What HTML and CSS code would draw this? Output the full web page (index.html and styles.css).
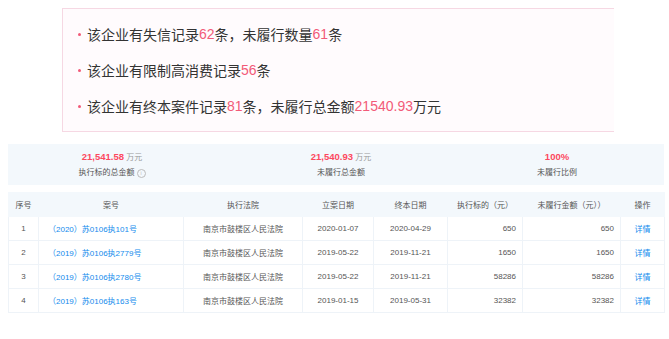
FILE: index.html
```html
<!DOCTYPE html>
<html lang="zh-CN">
<head>
  <meta charset="UTF-8">
  <meta name="viewport" content="width=device-width, initial-scale=1.0">
  <title>终本案件</title>
  <link rel="stylesheet" href="styles.css">
</head>
<body>
  <div class="resumen">
    <p class="linea"><span class="punto"></span>该企业有失信记录<em>62</em>条，未履行数量<em>61</em>条</p>
    <p class="linea"><span class="punto"></span>该企业有限制高消费记录<em>56</em>条</p>
    <p class="linea"><span class="punto"></span>该企业有终本案件记录<em>81</em>条，未履行总金额<em>21540.93</em>万元</p>
  </div>

  <div class="stats">
    <div class="stat">
      <div class="valor"><b>21,541.58</b> 万元</div>
      <div class="etiqueta">执行标的总金额 <span class="info">i</span></div>
    </div>
    <div class="stat">
      <div class="valor"><b>21,540.93</b> 万元</div>
      <div class="etiqueta">未履行总金额</div>
    </div>
    <div class="stat">
      <div class="valor"><b>100%</b></div>
      <div class="etiqueta">未履行比例</div>
    </div>
  </div>

  <table class="tabla">
    <colgroup>
      <col style="width:30px"><col style="width:145px"><col style="width:119px"><col style="width:71px">
      <col style="width:74px"><col style="width:75px"><col style="width:98px"><col style="width:44px">
    </colgroup>
    <thead>
      <tr>
        <th>序号</th><th>案号</th><th>执行法院</th><th>立案日期</th>
        <th>终本日期</th><th>执行标的（元）</th><th>未履行金额（元））</th><th>操作</th>
      </tr>
    </thead>
    <tbody>
      <tr>
        <td>1</td><td class="izq"><a>（2020）苏0106执101号</a></td><td>南京市鼓楼区人民法院</td>
        <td>2020-01-07</td><td>2020-04-29</td><td class="der">650</td><td class="der">650</td><td><a>详情</a></td>
      </tr>
      <tr>
        <td>2</td><td class="izq"><a>（2019）苏0106执2779号</a></td><td>南京市鼓楼区人民法院</td>
        <td>2019-05-22</td><td>2019-11-21</td><td class="der">1650</td><td class="der">1650</td><td><a>详情</a></td>
      </tr>
      <tr>
        <td>3</td><td class="izq"><a>（2019）苏0106执2780号</a></td><td>南京市鼓楼区人民法院</td>
        <td>2019-05-22</td><td>2019-11-21</td><td class="der">58286</td><td class="der">58286</td><td><a>详情</a></td>
      </tr>
      <tr>
        <td>4</td><td class="izq"><a>（2019）苏0106执163号</a></td><td>南京市鼓楼区人民法院</td>
        <td>2019-01-15</td><td>2019-05-31</td><td class="der">32382</td><td class="der">32382</td><td><a>详情</a></td>
      </tr>
    </tbody>
  </table>
</body>
</html>
```

FILE: styles.css
```css
body {
  margin: 0;
  padding: 8px 5px 0 8px;
  background-color: #fff;
  font-family: "Liberation Sans", "Noto Sans CJK SC", sans-serif;
  color: #333;
}

.resumen {
  margin-left: 54px;
  width: 552px;
  box-sizing: border-box;
  padding: 7px 0 7px 15px;
  background-color: #fffbfd;
  border: 1px solid #f6d8e3;
  border-right: none;
}

.linea {
  margin: 0;
  display: flex;
  align-items: center;
  height: 36px;
  font-size: 14px;
  color: #333;
}

.linea em {
  font-style: normal;
  color: #f25a78;
}

.punto {
  width: 3px;
  height: 3px;
  margin-right: 6px;
  border-radius: 50%;
  background-color: #f25a78;
}

.stats {
  display: flex;
  margin-top: 12px;
  height: 41px;
  background-color: #f3f8fc;
}

.stat {
  display: flex;
  flex-direction: column;
  align-items: center;
  justify-content: center;
  gap: 5px;
}

.stat:nth-child(1) {
  flex: 0 0 208px;
}

.stat:nth-child(2) {
  flex: 0 0 250px;
}

.stat:nth-child(3) {
  flex: 0 0 182px;
}

.valor {
  font-size: 8px;
  color: #999;
  line-height: 11px;
}

.valor b {
  font-size: 9.5px;
  color: #fd485e;
}

.etiqueta {
  display: flex;
  align-items: center;
  gap: 2px;
  font-size: 8px;
  color: #555;
  line-height: 10px;
}

.info {
  display: inline-flex;
  align-items: center;
  justify-content: center;
  width: 7px;
  height: 7px;
  border: 1px solid #bbb;
  border-radius: 50%;
  font-size: 5px;
  color: #bbb;
}

.tabla {
  margin-top: 7px;
  width: 656px;
  border-collapse: collapse;
  table-layout: fixed;
  font-size: 8px;
  color: #555;
}

.tabla th,
.tabla td {
  height: 23px;
  padding: 0 6px;
  text-align: center;
  border: 1px solid #eef3f8;
  white-space: nowrap;
  overflow: hidden;
}

.tabla th {
  font-weight: normal;
  color: #555;
  background-color: #f3f8fc;
  border-color: #f3f8fc;
}

.tabla td.izq {
  text-align: left;
  padding-left: 9px;
}

.tabla td.der {
  text-align: right;
}

.tabla a {
  color: #128bed;
}
```
